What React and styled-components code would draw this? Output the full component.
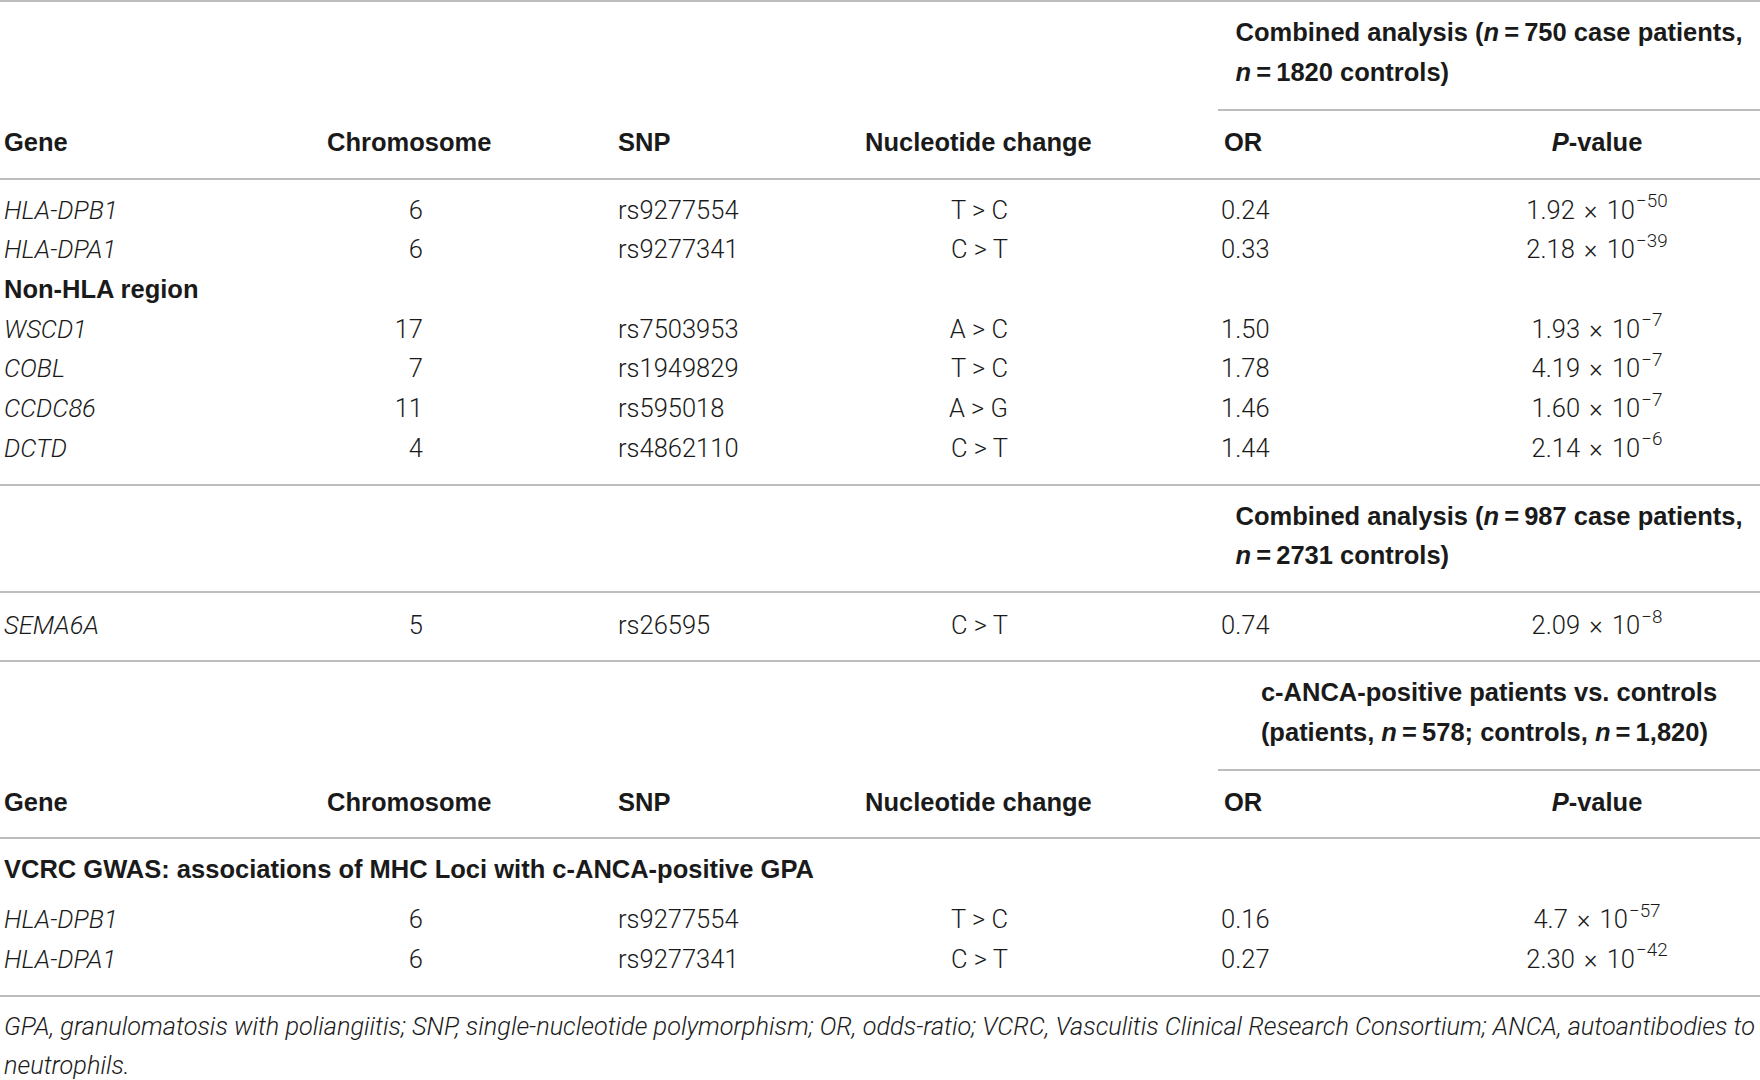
import React from "react";
import styled, { createGlobalStyle } from "styled-components";

const Global = createGlobalStyle`
  html, body { margin: 0; padding: 0; background: #ffffff; }
  body { font-family: "Roboto", "Liberation Sans", sans-serif; color: #1a1a1a; }
`;

const COLS = "323px 291px 247px 357px 216px 326px";
const SANS = `"Roboto", "Liberation Sans", sans-serif`;
const BOLD = `"Liberation Sans", Arial, sans-serif`;

const Table = styled.div`
  width: 1760px;
`;

const Rule = styled.div`
  height: 2px;
  background: #bdbdbd;
  margin-left: ${(p) => p.$from || 0}px;
`;

const Group = styled.div`
  padding: ${(p) => p.$pt || 0}px 0 ${(p) => p.$pb || 0}px;
`;

const Row = styled.div`
  display: grid;
  grid-template-columns: ${COLS};
  line-height: ${(p) => p.$lh || 39.7}px;
  padding-bottom: ${(p) => p.$pb || 0}px;
`;

const Cell = styled.div`
  grid-column: span ${(p) => p.$span || 1};
  text-align: ${(p) => p.$align || "left"};
  padding-left: ${(p) => (p.$pl ?? 4)}px;
  padding-right: ${(p) => p.$pr || 0}px;
  font-family: ${SANS};
  font-weight: 300;
  font-size: 25.5px;
  white-space: nowrap;
`;

const GeneCell = styled(Cell)`
  font-style: italic;
`;

const HeadCell = styled(Cell)`
  font-family: ${BOLD};
  font-weight: 700;
`;

const LabelCell = styled(Cell)`
  grid-column: 1 / -1;
  font-family: ${BOLD};
  font-weight: 700;
`;

const SpanCell = styled.div`
  grid-column: 5 / span 2;
  display: flex;
  justify-content: center;
`;

const SpanText = styled.div`
  text-align: left;
  font-family: ${BOLD};
  font-weight: 700;
  font-size: 25.5px;
  line-height: ${(p) => p.$lh || 39.5}px;
  white-space: nowrap;
`;

const Em = styled.i`
  font-style: italic;
`;

const Times = styled.span`
  margin: 0 3px;
`;

const Sup = styled.sup`
  font-size: 0.74em;
  line-height: 0;
  vertical-align: 0;
  position: relative;
  top: -0.6em;
  margin-left: 1px;
`;

const Footnote = styled.p`
  margin: 0;
  padding: 11px 0 0 4px;
  font-family: ${SANS};
  font-weight: 300;
  font-style: italic;
  font-size: 25.3px;
  line-height: 38.5px;
  white-space: nowrap;
`;

const T = "\u2009";

function Pval({ base, exp }) {
  return (
    <>
      {base}
      <Times>{" × "}</Times>10
      <Sup>−{exp}</Sup>
    </>
  );
}

function HeaderRow() {
  return (
    <Row $lh={39}>
      <HeadCell>Gene</HeadCell>
      <HeadCell>Chromosome</HeadCell>
      <HeadCell>SNP</HeadCell>
      <HeadCell>Nucleotide change</HeadCell>
      <HeadCell $pl={6}>OR</HeadCell>
      <HeadCell $align="center" $pl={0}>
        <Em>P</Em>-value
      </HeadCell>
    </Row>
  );
}

function DataRow({ gene, chr, snp, nuc, or, p }) {
  return (
    <Row>
      <GeneCell>{gene}</GeneCell>
      <Cell $align="right" $pr={191}>{chr}</Cell>
      <Cell>{snp}</Cell>
      <Cell $align="right" $pr={210}>{nuc}</Cell>
      <Cell $pl={3}>{or}</Cell>
      <Cell $align="center" $pl={0}>
        <Pval base={p[0]} exp={p[1]} />
      </Cell>
    </Row>
  );
}

const block1 = [
  { gene: "HLA-DPB1", chr: "6", snp: "rs9277554", nuc: "T > C", or: "0.24", p: ["1.92", "50"] },
  { gene: "HLA-DPA1", chr: "6", snp: "rs9277341", nuc: "C > T", or: "0.33", p: ["2.18", "39"] },
];
const block2 = [
  { gene: "WSCD1", chr: "17", snp: "rs7503953", nuc: "A > C", or: "1.50", p: ["1.93", "7"] },
  { gene: "COBL", chr: "7", snp: "rs1949829", nuc: "T > C", or: "1.78", p: ["4.19", "7"] },
  { gene: "CCDC86", chr: "11", snp: "rs595018", nuc: "A > G", or: "1.46", p: ["1.60", "7"] },
  { gene: "DCTD", chr: "4", snp: "rs4862110", nuc: "C > T", or: "1.44", p: ["2.14", "6"] },
];
const block3 = [
  { gene: "SEMA6A", chr: "5", snp: "rs26595", nuc: "C > T", or: "0.74", p: ["2.09", "8"] },
];
const block4 = [
  { gene: "HLA-DPB1", chr: "6", snp: "rs9277554", nuc: "T > C", or: "0.16", p: ["4.7", "57"] },
  { gene: "HLA-DPA1", chr: "6", snp: "rs9277341", nuc: "C > T", or: "0.27", p: ["2.30", "42"] },
];

export default function App() {
  return (
    <>
      <Global />
      <Table>
        <Rule />
        <Group $pt={10} $pb={17}>
          <Row $lh={40}>
            <SpanCell>
              <SpanText $lh={40}>
                Combined analysis (<Em>n</Em>{T}={T}750 case patients,
                <br />
                <Em>n</Em>{T}={T}1820 controls)
              </SpanText>
            </SpanCell>
          </Row>
        </Group>
        <Rule $from={1218} />
        <Group $pt={12} $pb={15.5}>
          <HeaderRow />
        </Group>
        <Rule />
        <Group $pt={11} $pb={16}>
          {block1.map((r) => (
            <DataRow key={r.gene} {...r} />
          ))}
          <Row>
            <LabelCell>Non-HLA region</LabelCell>
          </Row>
          {block2.map((r) => (
            <DataRow key={r.gene} {...r} />
          ))}
        </Group>
        <Rule />
        <Group $pt={10.5} $pb={15.5}>
          <Row $lh={39.5}>
            <SpanCell>
              <SpanText>
                Combined analysis (<Em>n</Em>{T}={T}987 case patients,
                <br />
                <Em>n</Em>{T}={T}2731 controls)
              </SpanText>
            </SpanCell>
          </Row>
        </Group>
        <Rule />
        <Group $pt={13} $pb={14}>
          {block3.map((r) => (
            <DataRow key={r.gene} {...r} />
          ))}
        </Group>
        <Rule />
        <Group $pt={11} $pb={16.5}>
          <Row $lh={39.5}>
            <SpanCell>
              <SpanText>
                c-ANCA-positive patients vs. controls
                <br />
                (patients, <Em>n</Em>{T}={T}578; controls, <Em>n</Em>{T}={T}1,820)
              </SpanText>
            </SpanCell>
          </Row>
        </Group>
        <Rule $from={1218} />
        <Group $pt={12.5} $pb={15}>
          <HeaderRow />
        </Group>
        <Rule />
        <Group $pt={11} $pb={16}>
          <Row $pb={10}>
            <LabelCell>VCRC GWAS: associations of MHC Loci with c-ANCA-positive GPA</LabelCell>
          </Row>
          {block4.map((r) => (
            <DataRow key={r.gene} {...r} />
          ))}
        </Group>
        <Rule />
        <Footnote>
          GPA, granulomatosis with poliangiitis; SNP, single-nucleotide polymorphism; OR, odds-ratio; VCRC,
          Vasculitis Clinical Research Consortium; ANCA, autoantibodies to
          <br />
          neutrophils.
        </Footnote>
      </Table>
    </>
  );
}
